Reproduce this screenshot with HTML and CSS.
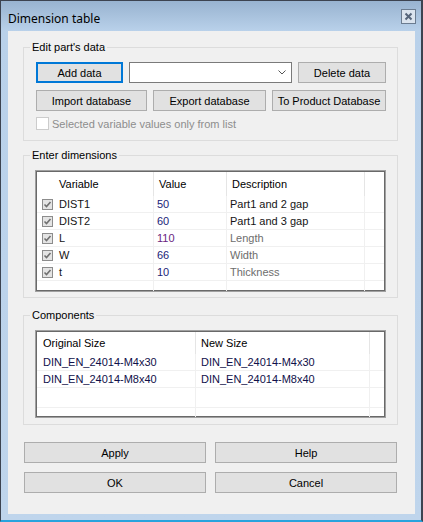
FILE: index.html
```
<!DOCTYPE html>
<html lang="en">
<head>
    <meta charset="UTF-8">
    <title>Dimension table</title>
    <link rel="stylesheet" href="styles.css">
</head>
<body>
    <div class="window">
        <!-- Title bar -->
        <div class="titlebar">
            <span class="title">Dimension table</span>
            <span class="close">
                <svg width="15" height="15" viewBox="0 0 15 15"><rect x="0.5" y="0.5" width="14" height="14" fill="#dbe4ee" stroke="#6b7c90"/><path d="M4.5 4.5 L10.5 10.5 M10.5 4.5 L4.5 10.5" stroke="#56657a" stroke-width="2"/></svg>
            </span>
        </div>

        <div class="client">
            <!-- Edit part's data -->
            <fieldset class="group group-edit">
                <legend>Edit part's data</legend>
                <div class="group-body">
                    <div class="btn-row">
                        <button class="btn btn-focus w-add">Add data</button>
                        <div class="combo">
                            <svg width="8" height="5" viewBox="0 0 8 5"><polyline points="0.5,0.5 4,4 7.5,0.5" fill="none" stroke="#555" stroke-width="1"/></svg>
                        </div>
                        <button class="btn w-delete">Delete data</button>
                    </div>
                    <div class="btn-row">
                        <button class="btn w-import">Import database</button>
                        <button class="btn w-export">Export database</button>
                        <button class="btn w-product">To Product Database</button>
                    </div>
                    <label class="check-row"><span class="checkbox"></span>Selected variable values only from list</label>
                </div>
            </fieldset>

            <!-- Enter dimensions -->
            <fieldset class="group group-dims">
                <legend>Enter dimensions</legend>
                <div class="group-body">
                    <div class="list list-dims">
                        <div class="lrow lhead">
                            <div class="cell c-var">Variable</div>
                            <div class="cell">Value</div>
                            <div class="cell">Description</div>
                            <div class="cell"></div>
                        </div>
                        <div class="lrow">
                            <div class="cell c-var"><svg class="tick" width="11" height="11" viewBox="0 0 11 11"><rect x="0.5" y="0.5" width="10" height="10" fill="#e4e4e4" stroke="#8c8c8c"/><path d="M2.5 5.5 L4.5 7.5 L8.5 3" fill="none" stroke="#707070" stroke-width="1.6"/></svg>DIST1</div>
                            <div class="cell val">50</div>
                            <div class="cell">Part1 and 2 gap</div>
                            <div class="cell"></div>
                        </div>
                        <div class="lrow">
                            <div class="cell c-var"><svg class="tick" width="11" height="11" viewBox="0 0 11 11"><rect x="0.5" y="0.5" width="10" height="10" fill="#e4e4e4" stroke="#8c8c8c"/><path d="M2.5 5.5 L4.5 7.5 L8.5 3" fill="none" stroke="#707070" stroke-width="1.6"/></svg>DIST2</div>
                            <div class="cell val">60</div>
                            <div class="cell">Part1 and 3 gap</div>
                            <div class="cell"></div>
                        </div>
                        <div class="lrow">
                            <div class="cell c-var"><svg class="tick" width="11" height="11" viewBox="0 0 11 11"><rect x="0.5" y="0.5" width="10" height="10" fill="#e4e4e4" stroke="#8c8c8c"/><path d="M2.5 5.5 L4.5 7.5 L8.5 3" fill="none" stroke="#707070" stroke-width="1.6"/></svg>L</div>
                            <div class="cell val val-alt">110</div>
                            <div class="cell muted">Length</div>
                            <div class="cell"></div>
                        </div>
                        <div class="lrow">
                            <div class="cell c-var"><svg class="tick" width="11" height="11" viewBox="0 0 11 11"><rect x="0.5" y="0.5" width="10" height="10" fill="#e4e4e4" stroke="#8c8c8c"/><path d="M2.5 5.5 L4.5 7.5 L8.5 3" fill="none" stroke="#707070" stroke-width="1.6"/></svg>W</div>
                            <div class="cell val">66</div>
                            <div class="cell muted">Width</div>
                            <div class="cell"></div>
                        </div>
                        <div class="lrow">
                            <div class="cell c-var"><svg class="tick" width="11" height="11" viewBox="0 0 11 11"><rect x="0.5" y="0.5" width="10" height="10" fill="#e4e4e4" stroke="#8c8c8c"/><path d="M2.5 5.5 L4.5 7.5 L8.5 3" fill="none" stroke="#707070" stroke-width="1.6"/></svg>t</div>
                            <div class="cell val">10</div>
                            <div class="cell muted">Thickness</div>
                            <div class="cell"></div>
                        </div>
                        <div class="lrow">
                            <div class="cell c-var"></div>
                            <div class="cell"></div>
                            <div class="cell"></div>
                            <div class="cell"></div>
                        </div>
                    </div>
                </div>
            </fieldset>

            <!-- Components -->
            <fieldset class="group group-comp">
                <legend>Components</legend>
                <div class="group-body">
                    <div class="list list-comp">
                        <div class="lrow lhead">
                            <div class="cell">Original Size</div>
                            <div class="cell">New Size</div>
                            <div class="cell"></div>
                        </div>
                        <div class="lrow">
                            <div class="cell">DIN_EN_24014-M4x30</div>
                            <div class="cell">DIN_EN_24014-M4x30</div>
                            <div class="cell"></div>
                        </div>
                        <div class="lrow">
                            <div class="cell">DIN_EN_24014-M8x40</div>
                            <div class="cell">DIN_EN_24014-M8x40</div>
                            <div class="cell"></div>
                        </div>
                        <div class="lrow tall">
                            <div class="cell"></div>
                            <div class="cell"></div>
                            <div class="cell"></div>
                        </div>
                        <div class="lrow">
                            <div class="cell"></div>
                            <div class="cell"></div>
                            <div class="cell"></div>
                        </div>
                    </div>
                </div>
            </fieldset>

            <!-- Dialog buttons -->
            <div class="dialog-buttons">
                <button class="btn">Apply</button>
                <button class="btn">Help</button>
                <button class="btn">OK</button>
                <button class="btn">Cancel</button>
            </div>
        </div>
    </div>
</body>
</html>
```

FILE: styles.css
```
/* page */
body {
    margin: 0;
    font-family: "Liberation Sans", Arial, sans-serif;
    font-size: 11px;
    color: #000;
}

.window {
    box-sizing: border-box;
    width: 423px;
    height: 522px;
    border-top: 1px solid #3c4350;
    border-left: 1px solid #3c4350;
    border-right: 2px solid #3c4350;
    border-bottom: 2px solid #29a3dd;
    background: linear-gradient(to bottom, #98b3d0 0px, #b9d1ea 30px, #bfd5ec 100%);
}

/* title bar */
.titlebar {
    box-sizing: border-box;
    height: 30px;
    padding: 8px 5px 0 7px;
    display: flex;
    justify-content: space-between;
    align-items: flex-start;
}
.title {
    font-family: "Noto Sans", "Open Sans", sans-serif;
    font-size: 12px;
    line-height: 16px;
    margin-top: 2px;
    color: #000;
}
.close {
    display: block;
    width: 15px;
    height: 15px;
}
.close svg {
    display: block;
}

/* client area */
.client {
    box-sizing: border-box;
    width: 407px;
    height: 483px;
    margin-left: 7px;
    background: #f0f0f0;
    padding-top: 9px;
}

/* group boxes */
.group {
    box-sizing: border-box;
    width: 375px;
    margin: 0 0 0 15px;
    padding: 0;
    min-width: 0;
    border: 1px solid #dcdcdc;
}
.group legend {
    margin-left: 6px;
    padding: 0 2px;
    line-height: 14px;
    font-size: 11px;
}
.group-body {
    padding: 8px 11px 5px 11px;
}
.group-edit .group-body {
    padding: 8px 11px 10px 12px;
}
.group-dims {
    margin-top: 7px;
}
.group-comp {
    margin-top: 10px;
}
.group-comp .group-body {
    padding-bottom: 6px;
}

/* buttons */
.btn {
    box-sizing: border-box;
    height: 21px;
    padding: 0;
    margin: 0;
    background: #e1e1e1;
    border: 1px solid #adadad;
    font-family: "Liberation Sans", Arial, sans-serif;
    font-size: 11px;
    color: #000;
}
.btn-focus {
    border: 2px solid #0078d7;
}

.btn-row {
    display: flex;
    gap: 6px;
    margin-bottom: 7px;
}
.btn-row + .btn-row {
    margin-bottom: 6px;
}
.w-add { width: 87px; }
.w-delete { width: 88px; }
.w-import { width: 111px; }
.w-export { width: 113px; }
.w-product { width: 114px; }

.combo {
    box-sizing: border-box;
    width: 163px;
    height: 21px;
    background: #fff;
    border: 1px solid #7a7a7a;
    display: flex;
    align-items: center;
    justify-content: flex-end;
    padding-right: 5px;
}
.combo svg {
    display: block;
}

.check-row {
    display: flex;
    align-items: center;
    gap: 3px;
    height: 13px;
    color: #8d8d8d;
}
.checkbox {
    box-sizing: border-box;
    width: 13px;
    height: 13px;
    background: #fff;
    border: 1px solid #cccccc;
}

/* list views */
.list {
    box-sizing: border-box;
    width: 351px;
    border: 1px solid #a0a0a0;
    padding: 1px;
    box-shadow: inset 0 0 0 1px #696969;
    background: #fff;
    overflow: hidden;
}
.list-dims {
    height: 122px;
}
.list-comp {
    height: 88px;
}

.lrow {
    box-sizing: border-box;
    display: grid;
    height: 17px;
    border-bottom: 1px solid #f0f0f0;
}
.list-dims .lrow {
    grid-template-columns: 116px 73px 138px 20px;
}
.list-comp .lrow {
    grid-template-columns: 158px 174px 15px;
}
.lrow.tall {
    height: 20px;
}

.cell {
    box-sizing: border-box;
    display: flex;
    align-items: center;
    padding-left: 3px;
    white-space: nowrap;
    overflow: hidden;
    color: #141414;
}
.cell + .cell {
    border-left: 1px solid #f0f0f0;
}
.list-comp .cell {
    padding-left: 5px;
    color: #10104a;
}
.list-comp .cell:first-child {
    padding-left: 6px;
}

.lhead {
    border-bottom: none;
}
.list-dims .lhead {
    height: 24px;
}
.list-comp .lhead {
    height: 22px;
}
.lhead .cell,
.list-comp .lhead .cell {
    padding-left: 5px;
    color: #000;
}
.lhead .cell + .cell {
    border-left: 1px solid #e5e5e5;
}
.list-comp .lhead .cell:first-child {
    padding-left: 6px;
}

.c-var {
    padding-left: 5px;
}
.lhead .c-var {
    padding-left: 22px;
}
.tick {
    display: block;
    margin-right: 6px;
    flex: none;
}

.val {
    color: #1a1c78;
}
.val-alt {
    color: #6a2480;
}
.muted {
    color: #6d6d6d;
}

/* OK / Cancel area */
.dialog-buttons {
    display: grid;
    grid-template-columns: 182px 182px;
    column-gap: 9px;
    row-gap: 9px;
    margin: 17px 0 0 16px;
}
```
